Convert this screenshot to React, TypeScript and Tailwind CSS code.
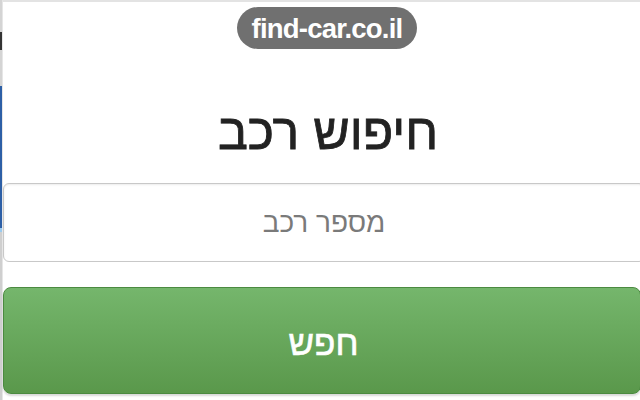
import React from "react";

export default function App() {
  return (
    <div className="w-[640px] h-[400px] overflow-hidden bg-white flex font-['Liberation_Sans',Arial,sans-serif]">
      <div className="w-[2px] shrink-0 flex flex-col">
        <div className="h-[32px] bg-[#d4d4d4]" />
        <div className="h-[18px] bg-[#333333]" />
        <div className="h-[36px] bg-[#d4d4d4]" />
        <div className="h-[142px] bg-[#2d5fa6]" />
        <div className="h-[4px] bg-[#9acbf0]" />
        <div className="flex-1 bg-[#cfcfcf]" />
      </div>
      <div className="w-px shrink-0 bg-[#e6e6e6]" />
      <div className="w-[642px] shrink-0 flex flex-col border-t-2 border-[#e3e3e3]">
        <div className="pt-[5px] flex justify-center pl-[6px]">
          <div className="h-[42px] px-[15px] rounded-full bg-[#707070] text-white font-bold text-[27.5px] leading-[44px] tracking-[-0.8px]">
            find-car.co.il
          </div>
        </div>
        <h1
          dir="rtl"
          className="mt-[53px] h-[60px] leading-[60px] text-center text-[50px] text-[#222222] pl-[8px] [-webkit-text-stroke:0.8px_#222222]"
        >
          חיפוש רכב
        </h1>
        <input
          dir="rtl"
          placeholder="מספר רכב"
          className="mt-[21px] h-[79px] w-full rounded-[6px] border border-[#c8c8c8] bg-white text-center text-[28px] text-[#333] placeholder:text-[#7a7a7a] shadow-[inset_0_1px_2px_rgba(0,0,0,0.08)] outline-none font-['Liberation_Sans',Arial,sans-serif]"
        />
        <button
          dir="rtl"
          className="mt-[25px] mr-[4px] h-[107px] rounded-[8px] border border-[#4b8a40] bg-gradient-to-b from-[#75b66c] to-[#5a984b] text-white text-[35px] flex items-center justify-center pt-[6px] pl-[3px] shadow-[0_2px_2px_rgba(0,0,0,0.15)] font-['Liberation_Sans',Arial,sans-serif] [-webkit-text-stroke:0.6px_#ffffff]"
        >
          חפש
        </button>
      </div>
    </div>
  );
}
